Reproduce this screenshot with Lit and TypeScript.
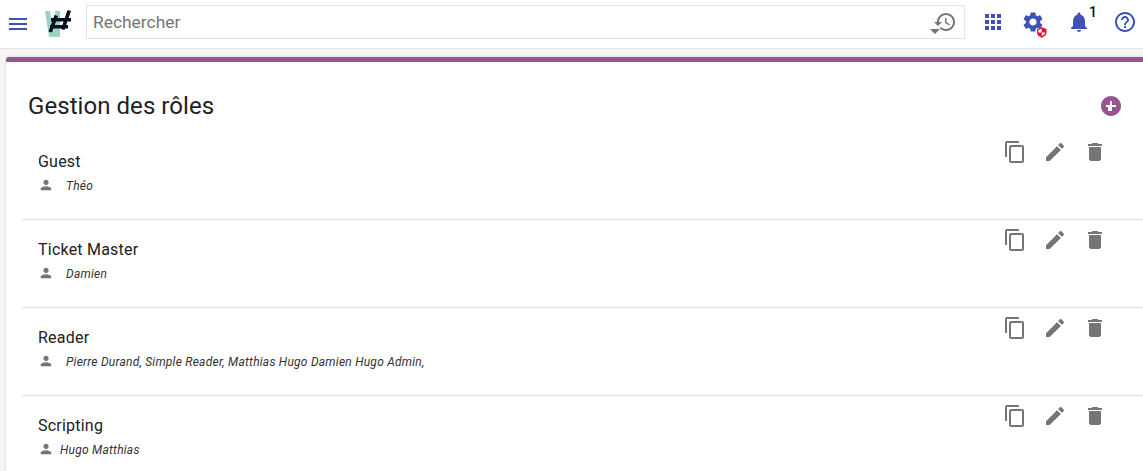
import { LitElement, html, css, svg } from "lit";
import { customElement } from "lit/decorators.js";

const P = {
  menu: "M3 18h18v-2H3v2zm0-5h18v-2H3v2zm0-7v2h18V6H3z",
  apps: "M4 8h4V4H4v4zm6 12h4v-4h-4v4zm-6 0h4v-4H4v4zm0-6h4v-4H4v4zm6 0h4v-4h-4v4zm6-10v4h4V4h-4zm-6 4h4V4h-4v4zm6 6h4v-4h-4v4zm0 6h4v-4h-4v4z",
  settings: "M19.14 12.94c.04-.3.06-.61.06-.94 0-.32-.02-.64-.07-.94l2.03-1.58c.18-.14.23-.41.12-.61l-1.92-3.32c-.12-.22-.37-.29-.59-.22l-2.39.96c-.5-.38-1.03-.7-1.62-.94l-.36-2.54c-.04-.24-.24-.41-.48-.41h-3.84c-.24 0-.43.17-.47.41l-.36 2.54c-.59.24-1.13.57-1.62.94l-2.39-.96c-.22-.08-.47 0-.59.22L2.74 8.87c-.12.21-.08.47.12.61l2.03 1.58c-.05.3-.09.63-.09.94s.02.64.07.94l-2.03 1.58c-.18.14-.23.41-.12.61l1.92 3.32c.12.22.37.29.59.22l2.39-.96c.5.38 1.03.7 1.62.94l.36 2.54c.05.24.24.41.48.41h3.84c.24 0 .44-.17.47-.41l.36-2.54c.59-.24 1.13-.56 1.62-.94l2.39.96c.22.08.47 0 .59-.22l1.92-3.32c.12-.22.07-.47-.12-.61l-2.01-1.58zM12 15.6c-1.98 0-3.6-1.62-3.6-3.6s1.62-3.6 3.6-3.6 3.6 1.62 3.6 3.6-1.62 3.6-3.6 3.6z",
  bell: "M12 22c1.1 0 2-.9 2-2h-4c0 1.1.89 2 2 2zm6-6v-5c0-3.07-1.64-5.64-4.5-6.32V4c0-.83-.67-1.5-1.5-1.5s-1.5.67-1.5 1.5v.68C7.63 5.36 6 7.92 6 11v5l-2 2v1h16v-1l-2-2z",
  help: "M11 18h2v-2h-2v2zm1-16C6.48 2 2 6.48 2 12s4.48 10 10 10 10-4.48 10-10S17.52 2 12 2zm0 18c-4.41 0-8-3.59-8-8s3.59-8 8-8 8 3.59 8 8-3.59 8-8 8zm0-14c-2.21 0-4 1.79-4 4h2c0-1.1.9-2 2-2s2 .9 2 2c0 2-3 1.75-3 5h2c0-2.25 3-2.5 3-5 0-2.21-1.79-4-4-4z",
  history: "M13 3c-4.97 0-9 4.03-9 9H1l3.89 3.89.07.14L9 12H6c0-3.87 3.13-7 7-7s7 3.13 7 7-3.13 7-7 7c-1.93 0-3.68-.79-4.94-2.06l-1.42 1.42C8.27 19.99 10.51 21 13 21c4.97 0 9-4.03 9-9s-4.03-9-9-9zm-1 5v5l4.28 2.54.72-1.21-3.5-2.08V8H12z",
  copy: "M16 1H4c-1.1 0-2 .9-2 2v14h2V3h12V1zm3 4H8c-1.1 0-2 .9-2 2v14c0 1.1.9 2 2 2h11c1.1 0 2-.9 2-2V7c0-1.1-.9-2-2-2zm0 16H8V7h11v14z",
  edit: "M3 17.25V21h3.75L17.81 9.94l-3.75-3.75L3 17.25zM20.71 7.04c.39-.39.39-1.02 0-1.41l-2.34-2.34c-.39-.39-1.02-.39-1.41 0l-1.83 1.83 3.75 3.75 1.83-1.83z",
  del: "M6 19c0 1.1.9 2 2 2h8c1.1 0 2-.9 2-2V7H6v12zM19 4h-3.5l-1-1h-5l-1 1H5v2h14V4z",
  person: "M12 12c2.21 0 4-1.79 4-4s-1.79-4-4-4-4 1.79-4 4 1.79 4 4 4zm0 2c-2.67 0-8 1.34-8 4v2h16v-2c0-2.66-5.33-4-8-4z",
  add: "M12 2C6.48 2 2 6.48 2 12s4.48 10 10 10 10-4.48 10-10S17.52 2 12 2zm5 11h-4v4h-4v-4H7v-2h4V7h2v4h4v2z",
};

const icon = (d: string, cls = "") =>
  html`<svg class="icon ${cls}" viewBox="0 0 24 24" aria-hidden="true">${svg`<path d=${d}></path>`}</svg>`;

const ROLES = [
  { name: "Guest", users: "Théo", tight: false },
  { name: "Ticket Master", users: "Damien", tight: false },
  { name: "Reader", users: "Pierre Durand, Simple Reader, Matthias Hugo Damien Hugo Admin,", tight: false },
  { name: "Scripting", users: "Hugo Matthias", tight: true },
];

@customElement("app-root")
export class AppRoot extends LitElement {
  static styles = css`
    :host {
      display: block;
      width: 1143px;
      height: 471px;
      overflow: hidden;
      background: #f5f5f5;
      font-family: Roboto, "Liberation Sans", sans-serif;
      color: #212121;
    }
    .icon { width: 24px; height: 24px; display: block; fill: currentColor; flex: none; }
    header {
      height: 48px;
      box-sizing: content-box;
      background: #fff;
      border-bottom: 1px solid #e4e4e4;
      display: flex;
      align-items: center;
      color: #3f51b5;
      padding-left: 6px;
    }
    .logo { width: 28px; height: 28px; margin: 0 14px; flex: none; display: block; }
    .search {
      width: 879px;
      height: 34px;
      box-sizing: border-box;
      border: 1px solid #e3e3e3;
      display: flex;
      align-items: center;
      padding: 0 6px;
      color: #757575;
      font-size: 17.4px;
      margin-top: -4px;
    }
    .search span { flex: 1; }
    .hist { position: relative; width: 24px; height: 24px; margin-right: 1px; color: #757575; }
    .hist::after {
      content: "";
      position: absolute;
      left: -3px; top: 19px;
      border: 5px solid transparent;
      border-top-color: #757575;
      border-bottom-width: 0;
    }
    .tools { display: flex; align-items: center; margin-left: 16px; margin-top: -4px; }
    .tool { position: relative; width: 24px; height: 24px; }
    .tool.gear { margin-left: 16px; }
    .tool.bellw { margin-left: 22px; }
    .tool.helpw { margin-left: 22px; }
    .shield { position: absolute; left: 16px; top: 17px; width: 9.5px; height: 11px; display: block; }
    .count {
      position: absolute;
      left: 22px; top: -6px;
      font-size: 14px;
      font-weight: 500;
      line-height: 16px;
      color: #111;
    }
    main {
      margin: 8px 0 0 6px;
      background: #fff;
      border-top: 5px solid #975592;
      border-radius: 3px 0 0 0;
      box-shadow: 0 0 3px rgba(0, 0, 0, 0.15);
      padding: 0 0 0 16px;
      height: 420px;
    }
    .top {
      display: flex;
      align-items: center;
      justify-content: space-between;
      height: 70px;
      padding: 18px 20px 0 6px;
      box-sizing: border-box;
    }
    h1 { margin: 0; font-size: 24px; font-weight: 400; line-height: 32px; color: #212121; letter-spacing: 0.06px; }
    .add { color: #975592; }
    .role {
      height: 88px;
      box-sizing: border-box;
      border-bottom: 1px solid #e0e0e0;
      display: flex;
      justify-content: space-between;
      padding: 8px 36px 0 16px;
    }
    .role:last-child { border-bottom: none; }
    .rname { font-size: 16px; line-height: 24px; margin-top: 10px; color: #212121; letter-spacing: 0.22px; }
    .users { display: flex; align-items: flex-start; font-size: 12px; font-style: italic; line-height: 16px; color: #333; margin-top: 4px; letter-spacing: 0.24px; }
    .users .icon { width: 16px; height: 16px; color: #757575; margin: -1px 12px 0 0; }
    .users.tight .icon { margin-right: 0; }
    .dot { margin: 0 3px 0 1px; font-size: 7px; color: #9e9e9e; }
    .actions { display: flex; gap: 16px; color: #757575; }
  `;

  render() {
    return html`
      <header>
        ${icon(P.menu)}
        <svg class="logo" viewBox="0 0 28 28" aria-hidden="true">
          <path d="M1 1h5l4 26H5z M11 1h5v26H9z" fill="#9fd3c0"></path>
          <path d="M10.500 5l3.500 1-6 16.500-3.500-1z M23.500 0l3.500 1-6.500 19-3.500-1z M7 8h20v3.500H7z M6 15h18v3.500H6z" fill="#0d1220"></path>
        </svg>
        <div class="search">
          <span>Rechercher</span>
          <div class="hist">${icon(P.history)}</div>
        </div>
        <div class="tools">
          <div class="tool">${icon(P.apps)}</div>
          <div class="tool gear">
            ${icon(P.settings)}
            <svg class="shield" viewBox="0 0 11 12" aria-hidden="true">
              <path d="M5.500 0L11 2v4c0 3-2.500 5-5.500 6C2.500 11 0 9 0 6V2z" fill="#e8112d"></path>
              <path d="M5.500 1.800L1.500 3.100V6H5.500z M5.500 6H9.500C9.200 7.800 7.500 9.300 5.500 10.200z" fill="#fff"></path>
            </svg>
          </div>
          <div class="tool bellw">${icon(P.bell)}<span class="count">1</span></div>
          <div class="tool helpw">${icon(P.help)}</div>
        </div>
      </header>
      <main>
        <div class="top">
          <h1>Gestion des rôles</h1>
          ${icon(P.add, "add")}
        </div>
        ${ROLES.map(
          (r) => html`
            <div class="role">
              <div>
                <div class="rname">${r.name}</div>
                <div class="users ${r.tight ? "tight" : ""}">
                  ${icon(P.person)}${r.tight ? html`<span class="dot">.</span>` : ""}<span>${r.users}</span>
                </div>
              </div>
              <div class="actions">${icon(P.copy)}${icon(P.edit)}${icon(P.del)}</div>
            </div>
          `
        )}
      </main>
    `;
  }
}
